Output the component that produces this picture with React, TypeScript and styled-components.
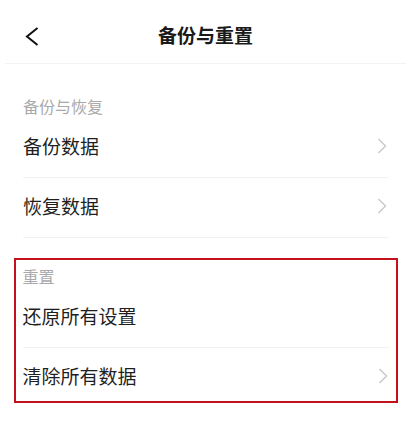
import styled, { createGlobalStyle } from 'styled-components';

const GlobalStyle = createGlobalStyle`
  body {
    margin: 0;
    background: #ffffff;
    font-family: "Noto Sans CJK SC", "Noto Sans", sans-serif;
  }
`;

const Page = styled.div`
  width: 411px;
  min-height: 421px;
  background: #ffffff;
  color: #1f1f1f;
`;

const Header = styled.header`
  height: 63px;
  display: flex;
  align-items: center;
  justify-content: center;
  position: relative;
  margin: 0 5px;
  border-bottom: 1px solid #f3f3f3;
`;

const BackButton = styled.button`
  position: absolute;
  left: 19px;
  top: 27px;
  width: 16px;
  height: 19px;
  padding: 0;
  border: none;
  background: none;
  display: flex;
  align-items: center;
  justify-content: center;
`;

const Title = styled.h1`
  margin: 0;
  font-size: 19px;
  font-weight: 700;
  line-height: 24px;
  color: #1a1a1a;
  transform: translateY(3px);
`;

const Section = styled.section`
  padding: 0 23px;
`;

const Annotated = styled.section`
  margin: 20px 13px 0 14px;
  border: 2.5px solid #c3121b;
  padding: 0 7.5px 0 6.5px;
`;

const SectionLabel = styled.div<{ $top: number }>`
  padding-top: ${p => p.$top}px;
  padding-bottom: 2px;
  font-size: 16px;
  line-height: 20px;
  color: #a9a9a9;
`;

const Row = styled.div<{ $last?: boolean }>`
  display: flex;
  align-items: center;
  justify-content: space-between;
  padding: 17px 0 ${p => (p.$last ? 15 : 21)}px;
  border-bottom: ${p => (p.$last ? 'none' : '1px solid #f2f2f2')};
`;

const RowText = styled.span`
  font-size: 19px;
  line-height: 21px;
  color: #1f1f1f;
`;

const Chevron = () => (
  <svg width="10" height="16" viewBox="0 0 10 16" style={{ marginRight: 1 }}>
    <path d="M1.5 1 L8.5 8 L1.5 15" fill="none" stroke="#c8c8c8" strokeWidth="1.4" />
  </svg>
);

export default function App() {
  return (
    <Page>
      <GlobalStyle />
      <Header>
        <BackButton aria-label="返回">
          <svg width="14" height="19" viewBox="0 0 14 19">
            <path d="M12.5 1 L2 9.5 L12.5 18" fill="none" stroke="#111" strokeWidth="2" />
          </svg>
        </BackButton>
        <Title>备份与重置</Title>
      </Header>

      <Section>
        <SectionLabel $top={32}>备份与恢复</SectionLabel>
        <Row>
          <RowText>备份数据</RowText>
          <Chevron />
        </Row>
        <Row>
          <RowText>恢复数据</RowText>
          <Chevron />
        </Row>
      </Section>

      <Annotated>
        <SectionLabel $top={6}>重置</SectionLabel>
        <Row>
          <RowText>还原所有设置</RowText>
        </Row>
        <Row $last>
          <RowText>清除所有数据</RowText>
          <Chevron />
        </Row>
      </Annotated>
    </Page>
  );
}
